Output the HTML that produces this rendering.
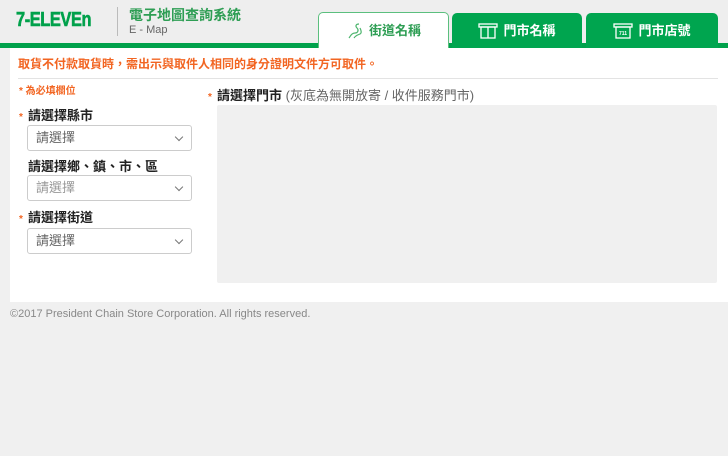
<html><head><style>
body{margin:0;width:728px;height:456px;background:#f0f0f0;font-family:"Liberation Sans","Noto Sans CJK TC",sans-serif;position:relative;overflow:hidden}
.a{position:absolute;line-height:1.2}
.hdr{left:0;top:0;width:728px;height:43px;background:#eeeeee}
.bar{left:0;top:43px;width:728px;height:5px;background:#00a14b}
.panel{left:10px;top:48px;width:718px;height:254px;background:#fff}
.tab{top:13px;height:35px;border-radius:5px 5px 0 0;background:#00a54f;color:#fff;font-size:13px;font-weight:bold;display:flex;align-items:center;justify-content:center;gap:5px;box-sizing:border-box}
.sel{left:27px;width:165px;height:26px;border:1px solid #ccc;border-radius:3px;box-sizing:border-box;font-size:13px;color:#666;padding:0 8px;line-height:24px}
.sel:after{content:"";position:absolute;right:9px;top:8px;width:5px;height:5px;border-right:1px solid #777;border-bottom:1px solid #777;transform:rotate(45deg)}
.lab{font-size:13px;font-weight:bold;color:#222}
.st{color:#f26522;font-size:10px;display:inline-block;width:9px}
</style></head><body>
<div class="a hdr"></div>
<div class="a" style="left:16px;top:10px;font-size:20px;font-weight:bold;color:#00a14b;letter-spacing:-0.5px;transform:scaleX(0.82);transform-origin:left;line-height:1;-webkit-text-stroke:0.6px #00a14b">7-ELEVEn</div>
<div class="a" style="left:117px;top:7px;width:1px;height:29px;background:#bbb"></div>
<div class="a" style="left:129px;top:7px;font-size:14px;color:#2e9e54;font-weight:bold">電子地圖查詢系統</div>
<div class="a" style="left:129px;top:24px;font-size:11px;color:#666">E - Map</div>
<div class="a bar"></div>
<div class="a tab" style="left:318px;width:131px;top:12px;height:37px;background:#fff;border:1px solid #5bbf7e;border-bottom:none;color:#2e9e54">
<svg width="18" height="16" viewBox="0 0 18 16" fill="none" stroke="#4cb56d" stroke-width="1.2"><path d="M3 15c2-3 3-5 6-5s4-3 2-5-1-4 2-4M8 15c2-3 4-3 6-4s1-4 0-6"/></svg>街道名稱</div>
<div class="a tab" style="left:452px;width:130px">
<svg width="20" height="16" viewBox="0 0 20 16" fill="none" stroke="#fff" stroke-width="1.3"><rect x="1" y="1" width="18" height="3"/><rect x="3" y="4" width="14" height="11"/><path d="M10 4v11"/></svg>門市名稱</div>
<div class="a tab" style="left:586px;width:132px">
<svg width="20" height="16" viewBox="0 0 20 16" fill="none" stroke="#fff" stroke-width="1.3"><rect x="1" y="1" width="18" height="3"/><rect x="3" y="4" width="14" height="11"/><text x="6" y="12" font-size="5" fill="#fff" stroke="none">711</text></svg>門市店號</div>
<div class="a panel"></div>
<div class="a" style="left:18px;top:57px;font-size:12px;font-weight:bold;color:#f26522">取貨不付款取貨時，需出示與取件人相同的身分證明文件方可取件。</div>
<div class="a" style="left:18px;top:78px;width:700px;height:1px;background:#e3e3e3"></div>
<div class="a" style="left:19px;top:86px;font-size:10px;color:#f26522;font-weight:bold">* 為必填欄位</div>
<div class="a lab" style="left:19px;top:108px"><span class="st">*</span>請選擇縣市</div>
<div class="a sel" style="top:125px">請選擇</div>
<div class="a lab" style="left:28px;top:159px">請選擇鄉、鎮、市、區</div>
<div class="a sel" style="top:175px;color:#999">請選擇</div>
<div class="a lab" style="left:19px;top:210px"><span class="st">*</span>請選擇街道</div>
<div class="a sel" style="top:228px">請選擇</div>
<div class="a lab" style="left:208px;top:88px"><span class="st">*</span>請選擇門市 <span style="font-weight:normal;color:#666">(灰底為無開放寄 / 收件服務門市)</span></div>
<div class="a" style="left:217px;top:105px;width:500px;height:178px;background:#f0f0f0;border-radius:2px"></div>
<div class="a" style="left:10px;top:308px;font-size:11px;color:#888">©2017 President Chain Store Corporation. All rights reserved.</div>
</body></html>
